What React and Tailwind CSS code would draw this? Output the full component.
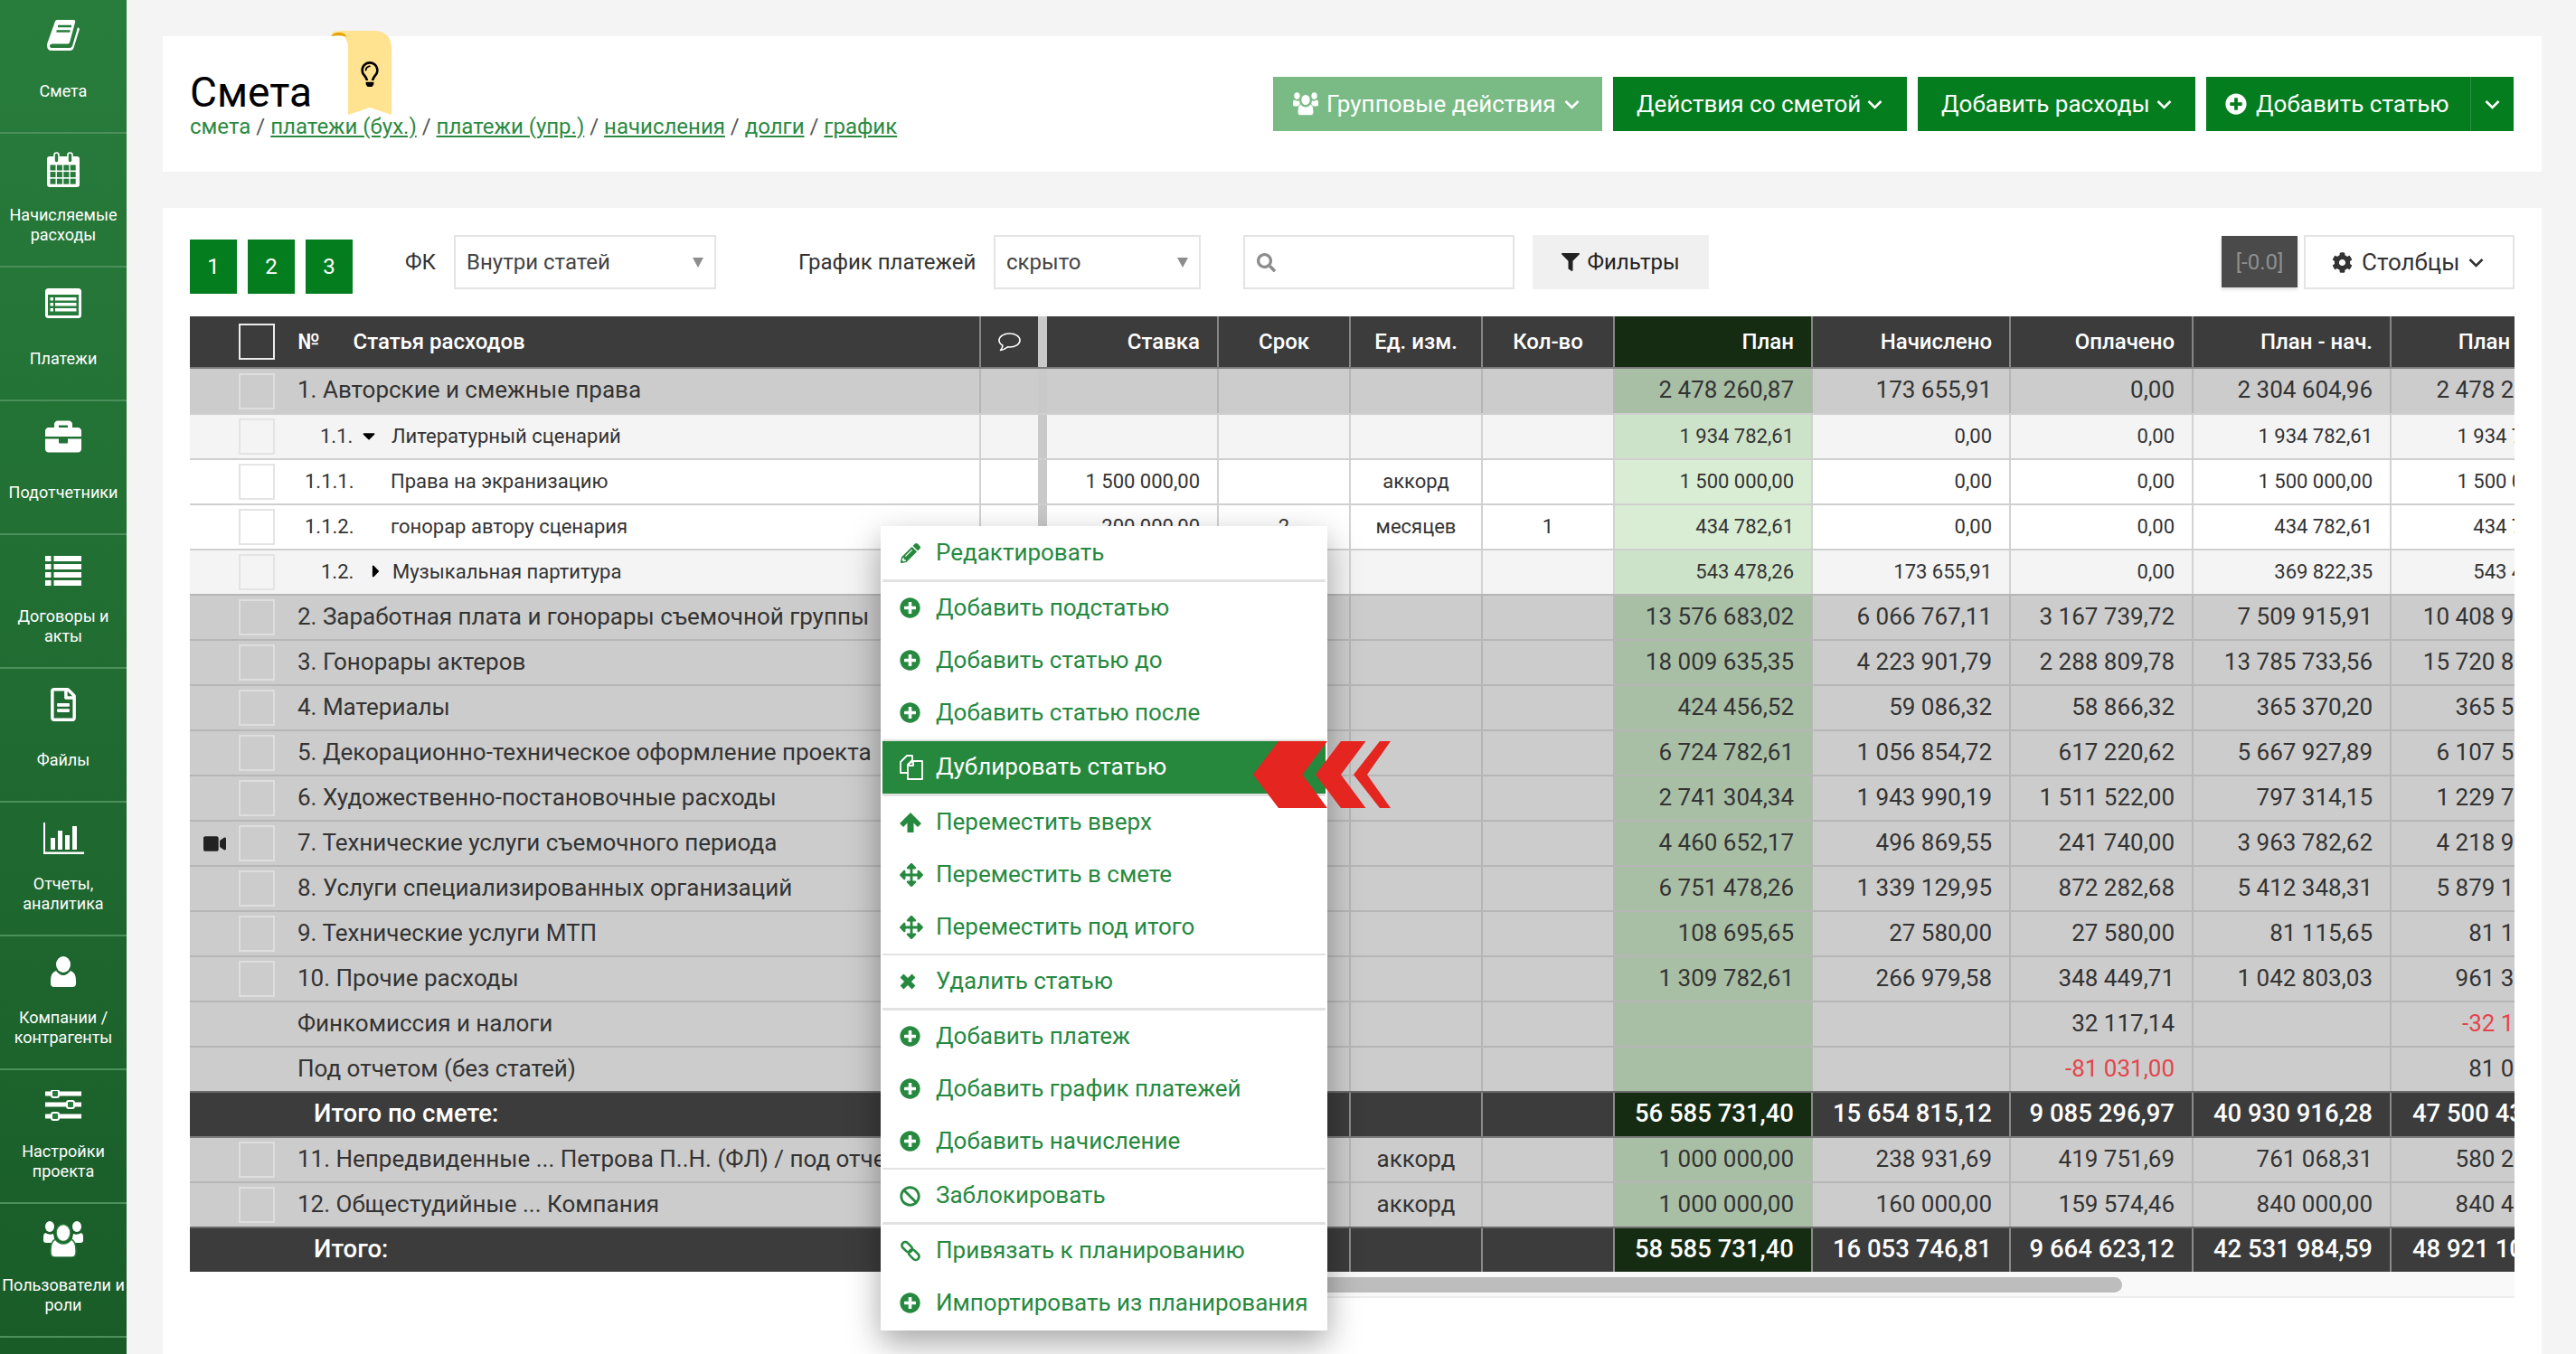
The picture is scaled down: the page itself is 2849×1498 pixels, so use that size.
import {
  FaArrowsAlt,
  FaBan,
  FaBriefcase,
  FaCaretDown,
  FaCaretRight,
  FaCog,
  FaFilter,
  FaPencilAlt,
  FaPlusCircle,
  FaRegFileAlt,
  FaRegLightbulb,
  FaSearch,
  FaVideo,
} from 'react-icons/fa';

const GREEN = '#267c3b';

function BookIcon() {
  return (
    <svg width="36" height="34" viewBox="0 0 36 34" fill="white">
      <path d="M9 1.5Q9.5 0 11 0H29Q32 0 31 3L25 25Q24.5 26.5 22.5 26.5H6Q3 26.5 3 29Q3 31 6 31H25Q27 31 28 29L34 8L36 10L29.5 31Q28.5 34 25 34H5Q0 34 0 28Q0 26 1 24Z" />
      <path d="M12 7H27M10.5 12.5H25.5" stroke={GREEN} strokeWidth="2.4" />
    </svg>
  );
}

function CalendarIcon() {
  const cells = [];
  for (let r = 0; r < 3; r++) {
    for (let c = 0; c < 4; c++) cells.push([3.5 + c * 7.4, 14.5 + r * 7.6]);
  }
  return (
    <svg width="36" height="39" viewBox="0 0 36 39" fill="white">
      <rect x="0" y="5" width="36" height="34" rx="3" />
      {cells.map(([x, y]) => (
        <rect key={`${x}-${y}`} x={x} y={y} width="6" height="6" fill={GREEN} />
      ))}
      <rect x="8" y="1" width="5" height="11" rx="2.5" fill={GREEN} stroke="white" strokeWidth="1.6" />
      <rect x="23" y="1" width="5" height="11" rx="2.5" fill={GREEN} stroke="white" strokeWidth="1.6" />
    </svg>
  );
}

function ListAltIcon() {
  return (
    <svg width="40" height="33" viewBox="0 0 40 33" fill="white">
      <rect width="40" height="33" rx="3.5" />
      <rect x="3" y="7" width="34" height="23" fill={GREEN} />
      {[10, 16, 22].map((y) => (
        <g key={y}>
          <rect x="5.5" y={y} width="3.5" height="3.5" />
          <rect x="11" y={y} width="23.5" height="3.5" />
        </g>
      ))}
    </svg>
  );
}

function ListIcon() {
  return (
    <svg width="40" height="33" viewBox="0 0 40 33" fill="white">
      {[0, 9, 18, 27].map((y) => (
        <g key={y}>
          <rect x="0" y={y} width="6.5" height="6" />
          <rect x="9.5" y={y} width="30.5" height="6" />
        </g>
      ))}
    </svg>
  );
}

function ChartIcon() {
  return (
    <svg width="45" height="35" viewBox="0 0 45 35" fill="white">
      <path d="M0 0H2V32.5H45V35H0Z" />
      <rect x="8" y="17" width="5" height="13" />
      <rect x="16" y="9" width="5" height="21" />
      <rect x="24" y="14" width="5" height="16" />
      <rect x="32" y="4" width="5" height="26" />
    </svg>
  );
}

function UserIcon() {
  return (
    <svg width="28" height="34" viewBox="0 0 28 34" fill="white">
      <ellipse cx="14" cy="9" rx="8" ry="9" />
      <path d="M6 16Q10 21 14 21Q18 21 22 16Q28 18 28 27V30Q28 34 24 34H4Q0 34 0 30V27Q0 18 6 16Z" />
    </svg>
  );
}

function SlidersIcon() {
  const rows = [
    [4, 11],
    [16, 28],
    [29, 11],
  ];
  return (
    <svg width="40" height="35" viewBox="0 0 40 35" fill="white">
      {rows.map(([y, x]) => (
        <g key={y}>
          <rect x="0" y={y - 2.5} width="40" height="5" />
          <rect x={x - 4} y={y - 4} width="8" height="8" rx="2" fill={GREEN} stroke="white" strokeWidth="2" />
        </g>
      ))}
    </svg>
  );
}

function GroupIcon({ width = 44, height = 40, cut = GREEN }) {
  return (
    <svg width={width} height={height} viewBox="0 0 44 40" fill="white">
      <ellipse cx="7" cy="6" rx="5" ry="6" />
      <ellipse cx="37" cy="6" rx="5" ry="6" />
      <path d="M2 13Q7 16 11 14L13 24H3Q0 24 0 21V17Q0 14 2 13Z" />
      <path d="M42 13Q37 16 33 14L31 24H41Q44 24 44 21V17Q44 14 42 13Z" />
      <ellipse cx="22" cy="13" rx="8" ry="9.5" stroke={cut} strokeWidth="1.5" />
      <path d="M13 20Q17 25 22 25Q27 25 31 20Q36 23 36 32V35Q36 40 31 40H13Q8 40 8 35V32Q8 23 13 20Z" stroke={cut} strokeWidth="1.5" />
    </svg>
  );
}

function CopyIcon() {
  return (
    <svg width="26" height="28" viewBox="0 0 26 28" fill="none" stroke="white" strokeWidth="1.8" strokeLinejoin="round">
      <path d="M8 1H14V6L9 11V20H1V8Z" />
      <path d="M9 11L15 7H25V27H9Z" fill="#26883d" />
      <path d="M15 7V12H9.5" />
    </svg>
  );
}

function ArrowUpIcon() {
  return (
    <svg width="24" height="22" viewBox="0 0 24 22" fill="currentColor">
      <path d="M12 0L24 12L20 16L15.5 11.5V22H8.5V11.5L4 16L0 12Z" />
    </svg>
  );
}

function CrossIcon() {
  return (
    <svg width="18" height="18" viewBox="0 0 18 18" fill="none" stroke="currentColor" strokeWidth="5.5">
      <path d="M2.5 2.5L15.5 15.5M15.5 2.5L2.5 15.5" />
    </svg>
  );
}

function LinkIcon() {
  return (
    <svg width="24" height="24" viewBox="0 0 24 24" fill="none" stroke="currentColor" strokeWidth="2.6">
      <rect x="1.5" y="4" width="13" height="7.5" rx="3.7" transform="rotate(45 8 8)" />
      <rect x="9.5" y="12.5" width="13" height="7.5" rx="3.7" transform="rotate(45 16 16)" />
    </svg>
  );
}

function CommentIcon() {
  return (
    <svg width="25" height="21" viewBox="0 0 25 21" fill="none" stroke="white" strokeWidth="1.6" strokeLinejoin="round">
      <path d="M12.5 1C6 1 1 4.2 1 8.5C1 11 2.8 13 5 14.2C4.8 16 4 18 2.5 19.5C6 19 8.5 17.5 10.5 15.9C11.2 16 11.8 16 12.5 16C19 16 24 12.8 24 8.5C24 4.2 19 1 12.5 1Z" />
    </svg>
  );
}

function Chevron() {
  return (
    <svg width="17" height="11" viewBox="0 0 17 11" fill="none" stroke="currentColor" strokeWidth="2.6" className="shrink-0">
      <path d="M1.5 2L8.5 9L15.5 2" />
    </svg>
  );
}

const NAV = [
  { label: 'Смета', icon: <BookIcon /> },
  { label: 'Начисляемые расходы', icon: <CalendarIcon /> },
  { label: 'Платежи', icon: <ListAltIcon /> },
  { label: 'Подотчетники', icon: <FaBriefcase className="w-[40px] h-[40px]" /> },
  { label: 'Договоры и акты', icon: <ListIcon /> },
  { label: 'Файлы', icon: <FaRegFileAlt className="w-[30px] h-[37px]" /> },
  { label: 'Отчеты, аналитика', icon: <ChartIcon /> },
  { label: 'Компании / контрагенты', icon: <UserIcon /> },
  { label: 'Настройки проекта', icon: <SlidersIcon /> },
  { label: 'Пользователи и роли', icon: <GroupIcon /> },
];

const LINKS = ['платежи (бух.)', 'платежи (упр.)', 'начисления', 'долги', 'график'];

// row kinds: g - серая статья, l - подстатья, w - строка, d - итог
const ROWS = [
  { kind: 'g', check: true, name: '1. Авторские и смежные права', vals: ['2 478 260,87', '173 655,91', '0,00', '2 304 604,96', '2 478 260,87'] },
  { kind: 'l', check: true, num: '1.1.', numX: 'ml-[50px] w-[79px] pr-[14px]', caret: 'down', name: 'Литературный сценарий', vals: ['1 934 782,61', '0,00', '0,00', '1 934 782,61', '1 934 782,61'] },
  { kind: 'w', check: true, num: '1.1.1.', numX: 'ml-[33px] w-[95px]', name: 'Права на экранизацию', stavka: '1 500 000,00', unit: 'аккорд', vals: ['1 500 000,00', '0,00', '0,00', '1 500 000,00', '1 500 000,00'] },
  { kind: 'w', check: true, num: '1.1.2.', numX: 'ml-[33px] w-[95px]', name: 'гонорар автору сценария', stavka: '200 000,00', term: '2', unit: 'месяцев', qty: '1', vals: ['434 782,61', '0,00', '0,00', '434 782,61', '434 782,61'] },
  { kind: 'l', check: true, num: '1.2.', numX: 'ml-[51px] w-[79px] pr-[7px]', caret: 'right', name: 'Музыкальная партитура', vals: ['543 478,26', '173 655,91', '0,00', '369 822,35', '543 478,26'] },
  { kind: 'g', check: true, name: '2. Заработная плата и гонорары съемочной группы', vals: ['13 576 683,02', '6 066 767,11', '3 167 739,72', '7 509 915,91', '10 408 943,30'] },
  { kind: 'g', check: true, name: '3. Гонорары актеров', vals: ['18 009 635,35', '4 223 901,79', '2 288 809,78', '13 785 733,56', '15 720 825,57'] },
  { kind: 'g', check: true, name: '4. Материалы', vals: ['424 456,52', '59 086,32', '58 866,32', '365 370,20', '365 590,20'] },
  { kind: 'g', check: true, name: '5. Декорационно-техническое оформление проекта', vals: ['6 724 782,61', '1 056 854,72', '617 220,62', '5 667 927,89', '6 107 562,00'] },
  { kind: 'g', check: true, name: '6. Художественно-постановочные расходы', vals: ['2 741 304,34', '1 943 990,19', '1 511 522,00', '797 314,15', '1 229 782,15'] },
  { kind: 'g', check: true, video: true, name: '7. Технические услуги съемочного периода', vals: ['4 460 652,17', '496 869,55', '241 740,00', '3 963 782,62', '4 218 912,17'] },
  { kind: 'g', check: true, name: '8. Услуги специализированных организаций', vals: ['6 751 478,26', '1 339 129,95', '872 282,68', '5 412 348,31', '5 879 195,58'] },
  { kind: 'g', check: true, name: '9. Технические услуги МТП', vals: ['108 695,65', '27 580,00', '27 580,00', '81 115,65', '81 115,65'] },
  { kind: 'g', check: true, name: '10. Прочие расходы', vals: ['1 309 782,61', '266 979,58', '348 449,71', '1 042 803,03', '961 332,90'] },
  { kind: 'g', name: 'Финкомиссия и налоги', vals: ['', '', '32 117,14', '', '-32 117,14'] },
  { kind: 'g', name: 'Под отчетом (без статей)', vals: ['', '', '-81 031,00', '', '81 031,00'] },
  { kind: 'd', name: 'Итого по смете:', vals: ['56 585 731,40', '15 654 815,12', '9 085 296,97', '40 930 916,28', '47 500 434,43'] },
  { kind: 'g', check: true, afterDark: true, name: '11. Непредвиденные ... Петрова П..Н. (ФЛ) / под отчетом', unit: 'аккорд', vals: ['1 000 000,00', '238 931,69', '419 751,69', '761 068,31', '580 248,31'] },
  { kind: 'g', check: true, name: '12. Общестудийные ... Компания', unit: 'аккорд', vals: ['1 000 000,00', '160 000,00', '159 574,46', '840 000,00', '840 425,54'] },
  { kind: 'd', name: 'Итого:', vals: ['58 585 731,40', '16 053 746,81', '9 664 623,12', '42 531 984,59', '48 921 108,28'] },
];

const KIND = {
  g: { row: 'bg-[#cccccc] text-[#333] text-[26px]', top: 'border-[#b6b6b6]', cell: 'border-[#b6b6b6]', plan: 'bg-[#a8bfa6]', box: 'border-[#dedede]' },
  l: { row: 'bg-[#f4f4f4] text-[#333] text-[22px]', top: 'border-[#cfcfcf]', cell: 'border-[#d2d2d2]', plan: 'bg-[#cde3c9]', box: 'border-[#e4e4e4]' },
  w: { row: 'bg-white text-[#333] text-[22px]', top: 'border-[#cfcfcf]', cell: 'border-[#d2d2d2]', plan: 'bg-[#d9edd5]', box: 'border-[#e4e4e4]' },
  d: { row: 'bg-[#3c3c3c] text-white text-[27.5px] font-medium', top: 'border-[#6a6a6a]', cell: 'border-[#8a8a8a]', plan: 'bg-[#162c12]', box: '' },
};

const PLUS = <FaPlusCircle className="w-[23px] h-[23px]" />;
const MOVE = <FaArrowsAlt className="w-[26px] h-[26px]" />;

const MENU = [
  [{ label: 'Редактировать', icon: <FaPencilAlt className="w-[22px] h-[22px] ml-[1px]" /> }],
  [
    { label: 'Добавить подстатью', icon: PLUS },
    { label: 'Добавить статью до', icon: PLUS },
    { label: 'Добавить статью после', icon: PLUS },
  ],
  [{ label: 'Дублировать статью', icon: <CopyIcon />, active: true }],
  [
    { label: 'Переместить вверх', icon: <ArrowUpIcon /> },
    { label: 'Переместить в смете', icon: MOVE },
    { label: 'Переместить под итого', icon: MOVE },
  ],
  [{ label: 'Удалить статью', icon: <CrossIcon /> }],
  [
    { label: 'Добавить платеж', icon: PLUS },
    { label: 'Добавить график платежей', icon: PLUS },
    { label: 'Добавить начисление', icon: PLUS },
  ],
  [{ label: 'Заблокировать', icon: <FaBan className="w-[23px] h-[23px]" /> }],
  [
    { label: 'Привязать к планированию', icon: <LinkIcon /> },
    { label: 'Импортировать из планирования', icon: PLUS },
  ],
];

function GreenButton({ children, className = '' }) {
  return (
    <div className={`flex items-center h-[60px] text-white text-[26px] ${className}`}>
      {children}
    </div>
  );
}

function Select({ value, className }) {
  return (
    <div className={`relative flex items-center h-[60px] border-2 border-[#e4e4e4] pl-[12px] text-[24px] text-[#444] ${className}`}>
      <span>{value}</span>
      <span className="absolute right-[12px] top-[23px] w-0 h-0 border-x-[6.5px] border-x-transparent border-t-[11px] border-t-[#8d8d8d]" />
    </div>
  );
}

function Sidebar() {
  return (
    <aside className="w-[140px] shrink-0 h-full bg-gradient-to-b from-[#287d3c] to-[#195c28] text-white">
      {NAV.map((item) => (
        <div key={item.label} className="h-[148px] border-b-2 border-[#4b8f5b] flex flex-col items-center">
          <div className="h-[78px] shrink-0 flex items-center justify-center">{item.icon}</div>
          <div className="h-[42px] mt-[2px] flex items-center text-center text-[18px] leading-[22.5px]">{item.label}</div>
        </div>
      ))}
    </aside>
  );
}

function Ribbon() {
  return (
    <div className="absolute left-[186px] -top-[6px] w-[67px] h-[93px] flex justify-end">
      <svg className="absolute inset-0" width="67" height="93" viewBox="0 0 67 93">
        <path d="M19 93V20Q19 4 6 4H0Q3 0 12 0H47Q67 0 67 20V93L43 85Z" fill="#ffe391" />
        <path d="M0 6Q3 2 9 2Q15 2 17.5 6.5Q9 4.5 0 6Z" fill="#e6a100" />
      </svg>
      <FaRegLightbulb className="relative mt-[34px] mr-[10px] w-[28px] h-[28px] text-black" />
    </div>
  );
}

function Header() {
  return (
    <section className="relative h-[150px] shrink-0 bg-white pl-[30px] pr-[31px] flex items-center justify-between">
      <Ribbon />
      <div className="pt-[1px]">
        <h1 className="text-[46px] leading-[48px] text-black">Смета</h1>
        <div className="text-[24px] leading-[28px] text-[#555]">
          <span className="text-[#2a8a41]">смета</span>
          {LINKS.map((link) => (
            <span key={link}>
              {' / '}
              <a className="text-[#2a8a41] underline underline-offset-2">{link}</a>
            </span>
          ))}
        </div>
      </div>
      <div className="flex gap-[12px]">
        <GreenButton className="bg-[#7abb85] w-[364px] pl-[22px] gap-[9px]">
          <GroupIcon width={28} height={26} cut="#7abb85" />
          <span>Групповые действия</span>
          <Chevron />
        </GreenButton>
        <GreenButton className="bg-[#037d1e] w-[325px] pl-[26px] gap-[7px]">
          <span>Действия со сметой</span>
          <Chevron />
        </GreenButton>
        <GreenButton className="bg-[#037d1e] w-[307px] pl-[26px] gap-[7px]">
          <span>Добавить расходы</span>
          <Chevron />
        </GreenButton>
        <GreenButton className="bg-[#037d1e] w-[340px] pl-[21px]">
          <FaPlusCircle className="w-[24px] h-[24px] mr-[10px]" />
          <span className="w-[237px] shrink-0">Добавить статью</span>
          <span className="h-full border-l border-[#2e9245] flex flex-1 items-center justify-center">
            <Chevron />
          </span>
        </GreenButton>
      </div>
    </section>
  );
}

function Toolbar() {
  return (
    <div className="flex items-start h-[60px] text-[24px] text-[#333] shrink-0">
      <div className="flex gap-[12px] mt-[5px]">
        {[1, 2, 3].map((n) => (
          <div key={n} className="w-[52px] h-[60px] bg-[#037d1e] text-white flex items-center justify-center">{n}</div>
        ))}
      </div>
      <span className="ml-[58px] w-[54px] leading-[60px]">ФК</span>
      <Select value="Внутри статей" className="w-[290px]" />
      <span className="ml-[91px] w-[216px] leading-[60px] whitespace-nowrap">График платежей</span>
      <Select value="скрыто" className="w-[229px]" />
      <div className="ml-[47px] w-[300px] h-[60px] border-2 border-[#e4e4e4] flex items-center pl-[13px] text-[#8c8c8c]">
        <FaSearch className="w-[21px] h-[21px]" />
      </div>
      <div className="ml-[20px] w-[195px] h-[60px] bg-[#f0f0f0] flex items-center justify-center gap-[8px] text-[#222]">
        <FaFilter className="w-[20px] h-[20px]" />
        <span>Фильтры</span>
      </div>
      <div className="ml-auto mt-[1px] w-[84px] h-[57px] bg-[#4a4a4a] text-[#8f8f8f] flex items-center justify-center shadow-[0_2px_4px_rgba(0,0,0,0.15)]">[-0.0]</div>
      <div className="ml-[7px] w-[233px] h-[60px] border-2 border-[#e4e4e4] flex items-center pl-[29px] gap-[10px] text-[26px] text-[#333]">
        <FaCog className="w-[23px] h-[23px]" />
        <span>Столбцы</span>
        <Chevron />
      </div>
    </div>
  );
}

const COLS = ['w-[190px]', 'w-[146px]', 'w-[146px]', 'w-[146px]'];

function HeaderRow() {
  const cell = 'shrink-0 h-full flex items-center border-r-2 border-[#868686]';
  return (
    <div className="flex h-[58px] bg-[#3c3c3c] border-b-2 border-[#7c7c7c] text-white text-[24px] font-medium">
      <div className="w-[938px] shrink-0 flex items-center">
        <span className="ml-[54px] w-[40px] h-[40px] border-2 border-[#ececec]" />
        <span className="ml-[25px]">№</span>
        <span className="ml-[37px] flex-1">Статья расходов</span>
        <span className="w-[65px] h-full border-l-2 border-[#868686] flex items-center justify-center">
          <CommentIcon />
        </span>
      </div>
      <div className="w-[10px] shrink-0 bg-[#c9c9c9]" />
      <div className={`${cell} ${COLS[0]} justify-end pr-[19px]`}>Ставка</div>
      <div className={`${cell} ${COLS[1]} justify-center`}>Срок</div>
      <div className={`${cell} ${COLS[2]} justify-center`}>Ед. изм.</div>
      <div className={`${cell} ${COLS[3]} justify-center`}>Кол-во</div>
      <div className={`${cell} w-[219px] justify-end pr-[19px] bg-[#162c12]`}>План</div>
      <div className={`${cell} w-[219px] justify-end pr-[19px]`}>Начислено</div>
      <div className={`${cell} w-[202px] justify-end pr-[19px]`}>Оплачено</div>
      <div className={`${cell} w-[219px] justify-end pr-[19px]`}>План - нач.</div>
      <div className="shrink-0 h-full flex items-center w-[219px] justify-end pr-[20px]">План - опл.</div>
    </div>
  );
}

function NameCell({ row }) {
  if (row.num) {
    return (
      <>
        <span className={`${row.numX} shrink-0 flex items-center justify-between`}>
          {row.num}
          {row.caret === 'down' && <FaCaretDown className="w-[22px] h-[22px] text-black" />}
          {row.caret === 'right' && <FaCaretRight className="w-[22px] h-[22px] text-black" />}
        </span>
        <span className="whitespace-nowrap">{row.name}</span>
      </>
    );
  }
  return <span className={`${row.kind === 'd' ? 'ml-[43px]' : 'ml-[25px]'} whitespace-nowrap`}>{row.name}</span>;
}

function TableRow({ row, first }) {
  const k = KIND[row.kind];
  const cell = `shrink-0 h-full pb-[2px] flex items-center border-r-2 ${k.cell}`;
  const red = (v) => (v.startsWith('-') ? 'text-[#e4454d]' : '');
  const top = first ? 'h-[49px]' : `h-[50px] border-t-2 ${row.afterDark ? 'border-[#7c7c7c]' : k.top}`;
  return (
    <div className={`flex ${top} ${k.row}`}>
      <div className="w-[938px] shrink-0 flex items-center overflow-hidden">
        <span className="w-[54px] shrink-0 flex justify-end pr-[14px]">
          {row.video && <FaVideo className="w-[25px] h-[25px] text-[#222]" />}
        </span>
        <span className={`w-[40px] h-[40px] shrink-0 border-2 ${row.check ? k.box : 'border-transparent'}`} />
        <div className="w-[779px] h-full pb-[2px] shrink-0 flex items-center overflow-hidden">
          <NameCell row={row} />
        </div>
        <span className={`w-[65px] h-full shrink-0 border-l-2 ${k.cell}`} />
      </div>
      <div className="w-[10px] shrink-0 bg-[#c9c9c9]" />
      <div className={`${cell} ${COLS[0]} justify-end pr-[19px]`}>{row.stavka}</div>
      <div className={`${cell} ${COLS[1]} justify-center`}>{row.term}</div>
      <div className={`${cell} ${COLS[2]} justify-center`}>{row.unit}</div>
      <div className={`${cell} ${COLS[3]} justify-center`}>{row.qty}</div>
      <div className={`${cell} w-[219px] justify-end pr-[19px] ${k.plan}`}>{row.vals[0]}</div>
      <div className={`${cell} w-[219px] justify-end pr-[19px]`}>{row.vals[1]}</div>
      <div className={`${cell} w-[202px] justify-end pr-[19px] ${red(row.vals[2])}`}>{row.vals[2]}</div>
      <div className={`${cell} w-[219px] justify-end pr-[19px]`}>{row.vals[3]}</div>
      <div className={`shrink-0 h-full pb-[2px] flex items-center w-[219px] justify-end pr-[20px] ${red(row.vals[4])}`}>{row.vals[4]}</div>
    </div>
  );
}

function RowMenu() {
  return (
    <div className="absolute left-[764px] top-[232px] w-[494px] bg-white py-[1px] text-[26px] text-[#26893f] shadow-[0_14px_34px_rgba(0,0,0,0.35)]">
      {MENU.map((group, i) => (
        <div key={i}>
          {i > 0 && <div className="h-[2.5px] mx-[2px] bg-[#e2e2e2]" />}
          {group.map((item) => (
            <div
              key={item.label}
              className={`h-[58px] mx-[2px] flex items-center pl-[19px] ${item.active ? 'bg-[#26883d] text-white' : ''}`}
            >
              <span className="w-[40px] shrink-0 flex items-center">{item.icon}</span>
              <span className="-mt-[1px] whitespace-nowrap">{item.label}</span>
            </div>
          ))}
        </div>
      ))}
      {/* красные стрелки поверх пункта меню */}
      <svg className="absolute left-[412px] top-[238px]" width="152" height="74" viewBox="1386 820 152 74" fill="#e5251f">
        <polygon points="1414,820 1468,820 1440.5,857 1468,894 1414,894 1386,857" />
        <polygon points="1483,820 1510.5,820 1483,857 1510.5,894 1483,894 1455,857" />
        <polygon points="1526,820 1538,820 1512,857 1538,894 1526,894 1497,857" />
      </svg>
    </div>
  );
}

export default function App() {
  return (
    <div className="flex w-[2849px] h-[1498px] overflow-hidden bg-[#f4f4f4] font-[Roboto,sans-serif]">
      <Sidebar />
      <main className="flex-1 min-w-0 h-full flex flex-col pt-[40px] pl-[40px] pr-[38px] gap-[40px]">
        <Header />
        <section className="flex-1 min-h-0 bg-white pt-[30px] px-[30px] flex flex-col gap-[30px]">
          <Toolbar />
          <div className="relative">
            <div className="overflow-hidden">
              <HeaderRow />
              {ROWS.map((row, i) => (
                <TableRow key={row.name} row={row} first={i === 0} />
              ))}
              {/* горизонтальный скролл правой части */}
              <div className="ml-[948px] h-[29px] bg-[#f9f9f9] border-b-2 border-[#ececec] pt-[6px]">
                <div className="w-[1189px] h-[17px] bg-[#bdbdbd] rounded-full" />
              </div>
            </div>
            <RowMenu />
          </div>
        </section>
      </main>
    </div>
  );
}
